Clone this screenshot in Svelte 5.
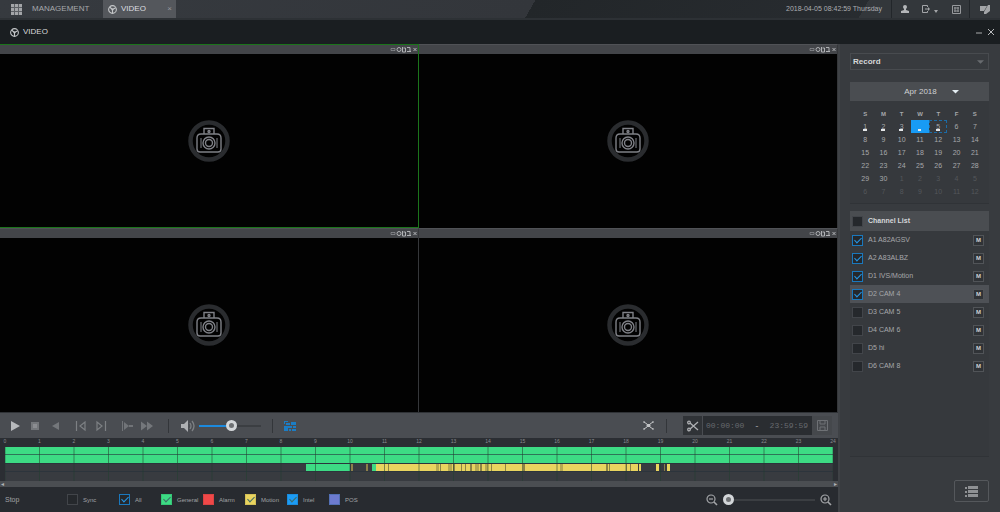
<script lang="ts">
	const cameras = [1, 2, 3, 4];
	let active = $state(1);

	const weekdays = ['S', 'M', 'T', 'W', 'T', 'F', 'S'];
	const recorded = [1, 2, 3, 4, 5];
	const weeks = Array.from({ length: 6 }, (_, w) =>
		Array.from({ length: 7 }, (_, d) => {
			const n = w * 7 + d + 1;
			return n > 30 ? { day: n - 30, other: true } : { day: n, other: false };
		})
	);

	let channels = $state([
		{ id: 'a1', name: 'A1 A82AGSV', on: true },
		{ id: 'a2', name: 'A2 A83ALBZ', on: true },
		{ id: 'd1', name: 'D1 IVS/Motion', on: true },
		{ id: 'd2', name: 'D2 CAM 4', on: true },
		{ id: 'd3', name: 'D3 CAM 5', on: false },
		{ id: 'd4', name: 'D4 CAM 6', on: false },
		{ id: 'd5', name: 'D5 hi', on: false },
		{ id: 'd6', name: 'D6 CAM 8', on: false }
	]);
	let selected = $state('d2');

	const types = [
		{ id: 'general', label: 'General', on: true },
		{ id: 'alarm', label: 'Alarm', on: false },
		{ id: 'motion', label: 'Motion', on: true },
		{ id: 'intel', label: 'Intel', on: true },
		{ id: 'pos', label: 'POS', on: false }
	];

	const hours = Array.from({ length: 25 }, (_, i) => i);
	// [start, width, type] on a 828 unit day
	const segments: [number, number, string][] = [
		[301, 44, 'general'],
		[346, 2, 'dim'],
		[361, 2, 'dim'],
		[367, 5, 'general'],
		[371, 262, 'motion'],
		[634, 2, 'motion'],
		[651, 3, 'motion'],
		[659, 1, 'dim'],
		[662, 3, 'motion']
	];
	const gaps = [
		[383, 1], [431, 3], [435, 1], [443, 4], [448, 2], [456, 1], [460, 1], [465, 2], [470, 4],
		[475, 2], [480, 3], [486, 1], [500, 1], [518, 2], [555, 3], [601, 2], [604, 1], [621, 1], [625, 1]
	];

	let volume = $state(53);
	let zoom = $state(0);
</script>

<div class="app">
	<header class="topbar">
		<button class="tab home">
			<svg width="11" height="11" viewBox="0 0 11 11" fill="#a3a5a8">
				<path d="M0 0h11v11H0z" opacity=".35" />
				{#each [0, 4, 8] as y}
					{#each [0, 4, 8] as x}
						<rect {x} {y} width="3" height="3" />
					{/each}
				{/each}
			</svg>
			MANAGEMENT
		</button>
		<button class="tab current">
			{@render reel(9)}
			<span>VIDEO</span>
			<span class="close">×</span>
		</button>
		<div class="status">
			<time>2018-04-05 08:42:59 Thursday</time>
			<button aria-label="User" class="first">
				<svg width="10" height="10" viewBox="0 0 10 10" fill="#b4b6b9">
					<circle cx="5" cy="3" r="2" />
					<path d="M4 4h2v2l3 1v2H1V7l3-1z" />
				</svg>
			</button>
			<button aria-label="Log out">
				<svg width="18" height="10" viewBox="0 0 18 10" fill="none" stroke="#a3a5a8">
					<path d="M6.500 3V1.500H1.500v7h5V7M4 5h4" />
					<path d="M7 3l2 2-2 2z" fill="#a3a5a8" stroke="none" />
					<path d="M13 6h4l-2 3z" fill="#a3a5a8" stroke="none" />
				</svg>
			</button>
			<button aria-label="QR code">
				<svg width="9" height="9" viewBox="0 0 9 9" fill="none" stroke="#97999c">
					<path d="M.5.5h8v8h-8zM3 2v5M6 2v5M2 3h5M2 6h5" />
				</svg>
			</button>
			<button aria-label="Displays" class="last">
				<svg width="12" height="11" viewBox="0 0 12 11" fill="#a3a5a8">
					<path d="M1 2h7L5 7H1zM9 1h2v6L7 10H5V8z" />
				</svg>
			</button>
		</div>
	</header>

	<div class="titlebar">
		{@render reel(9)}
		<h1>VIDEO</h1>
		<button aria-label="Minimize"><svg width="8" height="8" viewBox="0 0 8 8"><path d="M1 5h6" stroke="#a9abad" /></svg></button>
		<button aria-label="Close"><svg width="8" height="8" viewBox="0 0 8 8"><path d="M1 1l6 6M7 1L1 7" stroke="#b9bbbd" /></svg></button>
	</div>

	<div class="workspace">
		<main>
			<div class="grid">
				{#each cameras as cam (cam)}
					<section class="cell" class:active={active === cam}>
						<div class="cell-bar">
							<svg width="27" height="7" viewBox="0 0 27 7" fill="none" stroke="#b0b2b5">
								<path d="M1 2.500h4v2H1z" opacity=".5" />
								<circle cx="9" cy="3.500" r="2" />
								<path d="M12.500 1v5h3V2h-2M17 1.500h3v4M17 5.500h4" />
								<path d="M23.500 2l3 3M26.500 2l-3 3" />
							</svg>
						</div>
						<button class="screen" aria-label="Camera view {cam}" onclick={() => (active = cam)}>
							<svg width="44" height="44" viewBox="0 0 44 44" fill="none">
								<circle cx="22" cy="22" r="18.500" stroke="#2a2c2f" stroke-width="4.500" />
								<g stroke="#7f8187" stroke-width="1.400">
									<path d="M17 15V9.500h10V15" />
									<path d="M14 15h16q4 0 4 4v11q0 3-3 3H13q-3 0-3-3V19q0-4 4-4z" />
									<path d="M14 19v10M30 19v10" stroke-width="1" />
									<circle cx="22" cy="24" r="6" />
									<circle cx="22" cy="24" r="3.500" />
									<circle cx="22" cy="12.500" r="1" />
								</g>
							</svg>
						</button>
					</section>
				{/each}
			</div>

			<div class="toolbar">
				<div class="group">
					<button aria-label="Play"><svg width="12" height="12" viewBox="0 0 12 12"><path d="M2 1l9 5-9 5z" fill="#b7b9bc" /></svg></button>
					<button aria-label="Stop"><svg width="12" height="12" viewBox="0 0 12 12"><path d="M2 2h8v8H2z" fill="#74777b" /><path d="M4 4h4v4H4z" fill="#8b8d91" /></svg></button>
					<button aria-label="Reverse"><svg width="12" height="12" viewBox="0 0 12 12"><path d="M10 2v8L3 6z" fill="#74777b" /></svg></button>
				</div>
				<div class="group">
					<button aria-label="Previous frame"><svg width="12" height="12" viewBox="0 0 12 12" fill="none" stroke="#7d8084" stroke-width="1.200"><path d="M1.500 1v10M10 2v8L5 6z" /></svg></button>
					<button aria-label="Next frame"><svg width="12" height="12" viewBox="0 0 12 12" fill="none" stroke="#7d8084" stroke-width="1.200"><path d="M10.500 1v10M2 2v8l5-4z" /></svg></button>
				</div>
				<div class="group">
					<button aria-label="Slow"><svg width="12" height="12" viewBox="0 0 12 12"><path d="M1 1h1v10H1zM3 2l5 4-5 4zM8 5h4v2H8z" fill="#717478" /></svg></button>
					<button aria-label="Fast"><svg width="14" height="12" viewBox="0 0 14 12"><path d="M1 1.500L7 6l-6 4.500zM7 1.500L13 6l-6 4.500z" fill="#74777b" /></svg></button>
				</div>
				<i class="divider"></i>
				<div class="volume">
					<button aria-label="Mute">
						<svg width="15" height="12" viewBox="0 0 15 12">
							<path d="M1 4h3l4-4v12L4 8H1z" fill="#aeb0b3" />
							<path d="M10 3q2 3 0 6M12 1q4 5 0 10" fill="none" stroke="#7d8084" stroke-width="1.300" />
						</svg>
					</button>
					<input type="range" class="slider" aria-label="Volume" bind:value={volume} style="--fill: {volume}%" />
				</div>
				<i class="divider"></i>
				<button aria-label="Smart search" class="smart">
					<svg width="12" height="10" viewBox="0 0 12 10" fill="#1c7dc4">
						<path d="M0 0h4v1H1v2H0zM2 2h4v2H2zM7 1h5v3H7zM0 5h8v2H4v3H0zM9 5h3v2H9zM5 8h2v2H5zM8 8h4v2H8z" />
					</svg>
				</button>
				<div class="clip">
					<button aria-label="Full screen">
						<svg width="11" height="11" viewBox="0 0 11 11" fill="none" stroke="#c2c4c6">
							<path d="M1 2l3 2M10 2L7 4M1 9l3-2M10 9L7 7" />
							<path d="M1 1v2M10 1v2M1 8v2M10 8v2" />
							<path d="M4 4.500h3v2H4z" fill="#c2c4c6" />
						</svg>
					</button>
					<i class="divider"></i>
					<button aria-label="Cut" class="cut">
						<svg width="12" height="12" viewBox="0 0 12 12" fill="none" stroke="#aeb0b3" stroke-width="1.300">
							<path d="M3 3l8 7M3 9l8-7" />
							<circle cx="2" cy="2.500" r="1.300" />
							<circle cx="2" cy="9.500" r="1.300" />
						</svg>
					</button>
					<div class="range-time"><span>00:00:00</span><b>-</b><span>23:59:59</span></div>
					<button aria-label="Save" class="save">
						<svg width="11" height="11" viewBox="0 0 11 11" fill="none" stroke="#6e7175">
							<path d="M.5.5h10v10H.5zM3 1v3h5V1M3 10V7h5v3" />
						</svg>
					</button>
				</div>
			</div>

			<div class="timeline">
				<div class="ruler">
					{#each hours as h}<span>{h}</span>{/each}
				</div>
				<svg class="tracks" viewBox="0 0 828 34" preserveAspectRatio="none">
					<rect width="828" height="34" fill="#383b40" />
					<rect width="828" height="16" fill="#3ddb84" />
					{#each segments as [x, w, type]}
						<rect {x} y="17" width={w} height="7" class={type} />
					{/each}
					{#each gaps as [x, w]}
						<rect {x} y="17" width={w} height="7" fill="#40412f" opacity={w > 2 ? 0.3 : 0.55} />
					{/each}
					<path d="M0 7.500h828M0 16.500h828M0 24.500h828" stroke="#25303a" stroke-opacity=".6" />
					{#each hours as h}
						<rect x={h * 34.5 - 0.5} width="1" height="34" fill="#23402f" opacity=".55" />
					{/each}
				</svg>
				<div class="scroll"><span>◂</span><span>▸</span></div>
			</div>

			<footer>
				<span class="state">Stop</span>
				<label class="sync"><input type="checkbox" class="box" />Sync</label>
				<label><input type="checkbox" class="box" checked />All</label>
				{#each types as t (t.id)}
					<label><input type="checkbox" class="box {t.id}" checked={t.on} />{t.label}</label>
				{/each}
				<div class="zoom">
					<button aria-label="Zoom out">{@render lens('M3 5h4')}</button>
					<input type="range" class="slider" aria-label="Timeline zoom" bind:value={zoom} style="--fill: {zoom}%" />
					<button aria-label="Zoom in">{@render lens('M3 5h4M5 3v4')}</button>
				</div>
			</footer>
		</main>

		<aside>
			<div class="select">
				<select aria-label="Source">
					<option>Record</option>
					<option>Picture</option>
				</select>
				<svg width="7" height="4" viewBox="0 0 8 4"><path d="M0 0h8L4 4z" fill="#686b6f" /></svg>
			</div>

			<div class="calendar">
				<button class="month">Apr 2018 <svg width="7" height="5" viewBox="0 0 7 5"><path d="M0 1h7L3.500 4.500z" fill="#e4edf2" /></svg></button>
				<table>
					<thead>
						<tr>{#each weekdays as d}<th>{d}</th>{/each}</tr>
					</thead>
					<tbody>
						{#each weeks as week}
							<tr>
								{#each week as { day, other }}
									<td
										class:other
										class:picked={day === 4 && !other}
										class:today={day === 5 && !other}
										class:rec={!other && recorded.includes(day)}
									>
										<button>{day}</button>
									</td>
								{/each}
							</tr>
						{/each}
					</tbody>
				</table>
			</div>

			<div class="channels">
				<label class="head"><input type="checkbox" class="box" />Channel List</label>
				<ul>
					{#each channels as ch (ch.id)}
						<li class:selected={selected === ch.id}>
							<label><input type="checkbox" class="box" bind:checked={ch.on} />{ch.name}</label>
							<button onclick={() => (selected = ch.id)} aria-label="Main stream {ch.name}">M</button>
						</li>
					{/each}
				</ul>
			</div>

			<button class="files" aria-label="File list">
				<svg width="13" height="11" viewBox="0 0 13 11" fill="#8f9194">
					<path d="M0 1h2v2H0zM0 5h2v2H0zM0 9h2v2H0zM3 0h10v3H3zM3 4h10v3H3zM3 8h10v3H3z" />
				</svg>
			</button>
		</aside>
	</div>
</div>

{#snippet reel(size: number)}
	<svg width={size} height={size} viewBox="0 0 10 10">
		<circle cx="5" cy="5" r="4.300" fill="none" stroke="#c5c7c9" stroke-width="1.200" />
		<path d="M5 5L2 2.500M5 5l3.500-2M5 5v4" stroke="#c5c7c9" stroke-width="1.200" />
		<circle cx="5" cy="5" r="1.200" fill="#c5c7c9" />
	</svg>
{/snippet}

{#snippet lens(d: string)}
	<svg width="12" height="12" viewBox="0 0 12 12" fill="none" stroke="#a3a5a8" stroke-width="1.200">
		<circle cx="5" cy="5" r="4" />
		<path d="M8 8l3 3" stroke-width="1.600" />
		<path {d} />
	</svg>
{/snippet}

<style>
	:global(body) {
		margin: 0;
		background: #2b2e32;
	}

	.app {
		display: flex;
		flex-direction: column;
		min-height: 100vh;
		font-family: 'Liberation Sans', Arial, sans-serif;
		font-size: 7px;
		line-height: 8px;
		color: #b2b4b7;
	}

	.app *,
	.app *::after {
		box-sizing: border-box;
	}

	svg {
		display: block;
		flex: none;
	}

	button {
		display: flex;
		align-items: center;
		justify-content: center;
		padding: 0;
		border: 0;
		background: none;
		color: inherit;
		font: inherit;
	}

	/* top bar */
	.topbar {
		display: flex;
		height: 20px;
		background: linear-gradient(120deg, #363a3f 0, #33363b 53%, #222629 53%, #282c30 86%, #33373b 86%);
		border-bottom: 2px solid #2d3135;
	}

	.tab {
		gap: 10px;
		font-size: 8px;
	}

	.home {
		width: 103px;
		padding-left: 11px;
		justify-content: flex-start;
		color: #a6a8ab;
	}

	.current {
		width: 73px;
		gap: 4px;
		padding: 0 4px 0 5px;
		background: #54575c;
		color: #dcdee0;
	}

	.close {
		margin-left: auto;
		color: #94969a;
	}

	.status {
		display: flex;
		align-items: center;
		margin-left: auto;
	}

	.status time {
		margin-right: 9px;
		color: #acaeb1;
	}

	.status button {
		width: 26px;
		height: 18px;
	}

	.status .first {
		border-left: 1px solid #22262a;
	}

	.status .last {
		width: 31px;
		border-left: 1px solid #22262a;
	}

	.titlebar {
		display: flex;
		align-items: center;
		gap: 4px;
		height: 24px;
		padding: 0 5px 0 10px;
		background: #1a1e21;
	}

	h1 {
		flex: 1;
		margin: 0;
		font-size: 8px;
		font-weight: 400;
		color: #d6d8da;
	}

	.workspace {
		flex: 1;
		display: flex;
	}

	main {
		flex: 1;
		display: flex;
		flex-direction: column;
		min-width: 0;
		border-right: 2px solid #3f4246;
	}

	/* camera views */
	.grid {
		flex: 1;
		display: grid;
		grid-template-columns: 1fr 1fr;
		grid-template-rows: 1fr 1fr;
		background: #000;
	}

	.cell {
		display: flex;
		flex-direction: column;
		border-right: 1px solid #35373a;
		border-top: 1px solid #505256;
	}

	.cell.active {
		border-color: #1b741b;
		border-bottom: 1px solid #1b741b;
	}

	.cell-bar {
		display: flex;
		align-items: center;
		justify-content: flex-end;
		height: 9px;
		padding-right: 1px;
		background: #434549;
	}

	.screen {
		flex: 1;
		background: #020202;
	}

	/* playback controls */
	.toolbar {
		display: flex;
		align-items: center;
		height: 26px;
		padding: 0 6px 0 5px;
		gap: 6px;
		background: #4a4d52;
		border-top: 1px solid #2f3236;
	}

	.group {
		display: flex;
	}

	.group button {
		width: 20px;
		height: 20px;
	}

	.divider {
		width: 1px;
		height: 14px;
		margin: 0 5px;
		background: #33363a;
	}

	.volume {
		display: flex;
		align-items: center;
		gap: 4px;
	}

	.volume .slider {
		width: 62px;
	}

	.slider {
		appearance: none;
		height: 12px;
		margin: 0;
		background: linear-gradient(to right, #1c8ade var(--fill), #3b3e42 var(--fill)) center / 100% 2px no-repeat;
	}

	.slider::-webkit-slider-thumb {
		appearance: none;
		width: 11px;
		height: 11px;
		border: 3px solid #d3d6d9;
		border-radius: 50%;
		background: #6d7073;
	}

	.clip {
		display: flex;
		align-items: center;
		margin-left: auto;
	}

	.clip .divider {
		margin: 0 16px 0 12px;
	}

	.cut {
		width: 19px;
		height: 19px;
		margin-right: 1px;
		background: #303337;
	}

	.range-time {
		display: flex;
		align-items: center;
		justify-content: space-between;
		width: 109px;
		height: 19px;
		padding: 0 4px 0 3px;
		background: #2a2d31;
		color: #66696e;
		font-family: 'Liberation Mono', monospace;
		font-size: 8px;
	}

	.range-time b {
		color: #8f9195;
	}

	.save {
		width: 20px;
		height: 19px;
		background: #45484c;
	}

	/* timeline */
	.timeline {
		background: #2b2e33;
	}

	.ruler {
		display: flex;
		justify-content: space-between;
		height: 9px;
		padding: 0 4px;
		color: #8a8c90;
		font-size: 5px;
		line-height: 7px;
	}

	.ruler span {
		display: flex;
		justify-content: center;
		width: 2px;
	}

	.tracks {
		width: calc(100% - 10px);
		height: 34px;
		margin-left: 5px;
	}

	.general {
		fill: #3ddb84;
	}

	.motion {
		fill: #e9d45f;
	}

	.dim {
		fill: #8c804a;
	}

	.scroll {
		display: flex;
		justify-content: space-between;
		height: 6px;
		padding: 0 1px;
		background: #4b4e52;
		font-size: 6px;
		line-height: 6px;
		color: #b2b4b7;
	}

	footer {
		display: flex;
		align-items: center;
		height: 25px;
		padding: 0 6px 0 5px;
		background: #282b30;
		font-size: 6px;
		color: #a0a2a5;
	}

	footer .state {
		width: 62px;
		font-size: 7px;
	}

	label {
		display: flex;
		align-items: center;
	}

	footer label {
		gap: 5px;
		width: 42px;
	}

	footer .sync {
		width: 52px;
	}

	.box {
		flex: none;
		display: flex;
		justify-content: center;
		appearance: none;
		width: 11px;
		height: 11px;
		margin: 0;
		border: 1px solid #42454a;
		background: #25282c;
	}

	.box:checked {
		border-color: #1a78bd;
	}

	.box:checked::after {
		content: '';
		width: 4px;
		height: 7px;
		border: solid #2797e6;
		border-width: 0 1px 1px 0;
		transform: rotate(45deg);
	}

	.box.general {
		background: #3ddb84;
		border-color: #35c677;
	}

	.box.alarm {
		background: #f04848;
		border-color: #d94343;
	}

	.box.motion {
		background: #e9d45f;
		border-color: #d3c058;
	}

	.box.intel {
		background: #1c9cf5;
		border-color: #1a8cdd;
	}

	.box.pos {
		background: #6d7bd0;
		border-color: #5370b5;
	}

	.box.general::after,
	.box.motion::after,
	.box.intel::after {
		border-color: #3f6a66;
	}

	.zoom {
		display: flex;
		align-items: center;
		gap: 5px;
		margin-left: auto;
	}

	.zoom .slider {
		width: 92px;
	}

	/* side panel */
	aside {
		display: flex;
		flex-direction: column;
		flex: none;
		width: 160px;
		padding: 9px 11px 10px 10px;
		background: #383b3f;
	}

	.select {
		display: flex;
		align-items: center;
		height: 17px;
		padding-right: 4px;
		border: 1px solid #484b4f;
	}

	select {
		flex: 1;
		appearance: none;
		height: 15px;
		padding: 0 2px;
		border: 0;
		background: none;
		color: #d5d7d9;
		font: bold 8px 'Liberation Sans', Arial, sans-serif;
	}

	.calendar {
		margin-top: 12px;
		border-bottom: 1px solid #303337;
		background: #36393d;
	}

	.month {
		gap: 15px;
		width: 100%;
		height: 19px;
		padding-left: 24px;
		background: #4a4d51;
		color: #d0d2d4;
		font-size: 8px;
	}

	table {
		width: 100%;
		padding: 6px 5px 5px 6px;
		border-spacing: 0;
		table-layout: fixed;
	}

	th,
	td {
		height: 13px;
		padding: 0;
		text-align: center;
		font-weight: 700;
		font-size: 6px;
		color: #a6a8ab;
	}

	td {
		font-weight: 400;
		font-size: 7px;
	}

	td button {
		width: 100%;
		height: 13px;
	}

	.rec button {
		text-decoration: underline dotted 2px #e6e8ea;
		text-underline-offset: 1px;
	}

	.other {
		color: #54575b;
	}

	.picked {
		background: #189bf5;
		color: #189bf5;
	}

	.today button {
		border: 1px dashed #1b6ba6;
	}

	.channels {
		flex: 1;
		margin: 7px 0 23px;
		border-bottom: 1px solid #303337;
		background: #36393d;
	}

	.channels label {
		flex: 1;
		gap: 5px;
	}

	.channels .head {
		height: 20px;
		padding-left: 2px;
		background: #4a4d51;
		color: #d5d7d9;
		font-weight: 700;
	}

	ul {
		margin: 0;
		padding: 0;
		list-style: none;
	}

	li {
		display: flex;
		align-items: center;
		height: 18px;
		padding: 0 5px 0 2px;
		color: #a6a8ab;
	}

	li.selected {
		background: #4e5156;
	}

	li button {
		width: 11px;
		height: 11px;
		border: 1px solid #515458;
		background: #303337;
		color: #d0d2d4;
		font-weight: 700;
		font-size: 6px;
	}

	.files {
		align-self: flex-end;
		width: 35px;
		height: 22px;
		border: 1px solid #55585c;
		border-radius: 2px;
	}
</style>
